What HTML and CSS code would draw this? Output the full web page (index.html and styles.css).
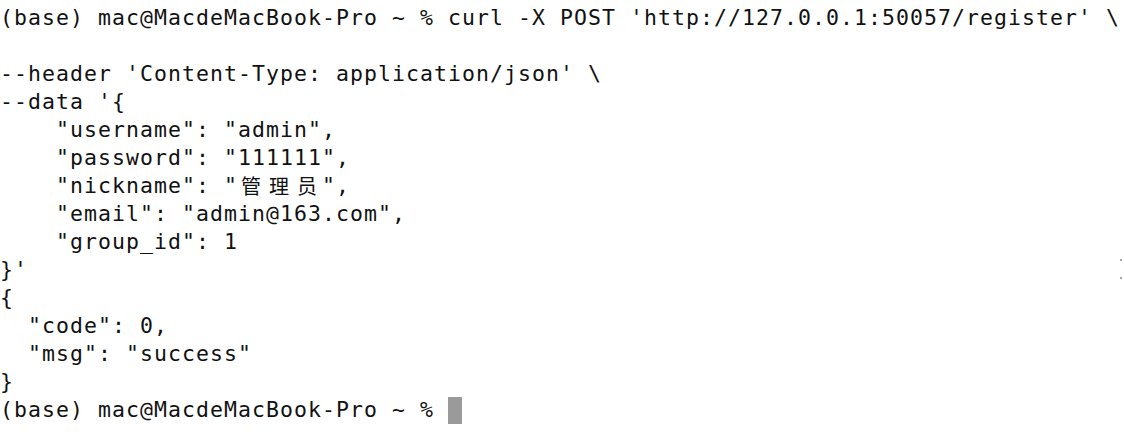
FILE: index.html
```html
<!DOCTYPE html>
<html>
<head>
<meta charset="utf-8">
<link rel="stylesheet" href="styles.css">
</head>
<body>
<main class="term">
<div class="ln">(base) mac@MacdeMacBook-Pro ~ % curl -X POST 'http://127.0.0.1:50057/register' \</div>
<div class="ln"> </div>
<div class="ln">--header 'Content-Type: application/json' \</div>
<div class="ln">--data '{</div>
<div class="ln">    "username": "admin",</div>
<div class="ln">    "password": "111111",</div>
<div class="ln">    "nickname": "<span class="cjk">管</span><span class="cjk">理</span><span class="cjk">员</span>",</div>
<div class="ln">    "email": "admin@163.com",</div>
<div class="ln">    "group_id": 1</div>
<div class="ln">}'</div>
<div class="ln">{</div>
<div class="ln">  "code": 0,</div>
<div class="ln">  "msg": "success"</div>
<div class="ln">}</div>
<div class="ln">(base) mac@MacdeMacBook-Pro ~ % <span class="cursor"></span></div>
<div class="marks"><span class="dot"></span><span class="dot"></span></div>
</main>
</body>
</html>
```
FILE: styles.css
```css
html, body {
  margin: 0;
  padding: 0;
  background: #ffffff;
}
.term {
  position: relative;
  width: 1124px;
  height: 432px;
  padding-top: 4px;
  box-sizing: border-box;
  font-family: "DejaVu Sans Mono", "Noto Sans CJK SC", monospace;
  font-size: 21.5px;
  letter-spacing: 1.056px;
  color: #111111;
}
.ln {
  height: 28px;
  line-height: 28px;
  white-space: pre;
}
.cjk {
  display: inline-block;
  box-sizing: border-box;
  width: 28px;
  padding-left: 3px;
  text-align: left;
  letter-spacing: 0;
  font-family: "Noto Sans CJK SC", sans-serif;
  font-size: 20px;
  vertical-align: top;
}
.cursor {
  display: inline-block;
  width: 14px;
  height: 27px;
  margin-top: 1px;
  background: #9a9a9a;
  vertical-align: top;
}
.marks {
  position: absolute;
  left: 1120px;
  top: 259px;
  display: flex;
  flex-direction: column;
  gap: 16px;
}
.dot {
  width: 2px;
  height: 2px;
  background: #a8a8a8;
}
```
